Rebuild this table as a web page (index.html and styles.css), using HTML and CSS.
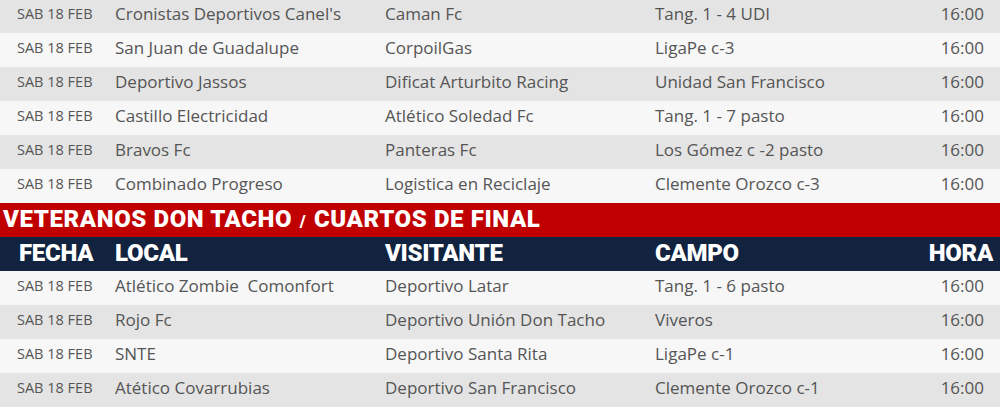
FILE: index.html
```html
<!DOCTYPE html>
<html lang="es">
<head>
<meta charset="utf-8">
<title>Partidos</title>
<link rel="stylesheet" href="styles.css">
</head>
<body>
<div class="schedule">
  <div class="row first"><span class="date">SAB 18 FEB</span><span>Cronistas Deportivos Canel's</span><span>Caman Fc</span><span>Tang. 1 - 4 UDI</span><span class="time">16:00</span></div>
  <div class="row"><span class="date">SAB 18 FEB</span><span>San Juan de Guadalupe</span><span>CorpoilGas</span><span>LigaPe c-3</span><span class="time">16:00</span></div>
  <div class="row"><span class="date">SAB 18 FEB</span><span>Deportivo Jassos</span><span>Dificat Arturbito Racing</span><span>Unidad San Francisco</span><span class="time">16:00</span></div>
  <div class="row"><span class="date">SAB 18 FEB</span><span>Castillo Electricidad</span><span>Atlético Soledad Fc</span><span>Tang. 1 - 7 pasto</span><span class="time">16:00</span></div>
  <div class="row"><span class="date">SAB 18 FEB</span><span>Bravos Fc</span><span>Panteras Fc</span><span>Los Gómez c -2 pasto</span><span class="time">16:00</span></div>
  <div class="row"><span class="date">SAB 18 FEB</span><span>Combinado Progreso</span><span>Logistica en Reciclaje</span><span>Clemente Orozco c-3</span><span class="time">16:00</span></div>
</div>
<div class="section-title">VETERANOS DON TACHO <span class="slash">/</span> CUARTOS DE FINAL</div>
<div class="head-row"><span>FECHA</span><span>LOCAL</span><span>VISITANTE</span><span>CAMPO</span><span class="time">HORA</span></div>
<div class="schedule alt">
  <div class="row"><span class="date">SAB 18 FEB</span><span>Atlético Zombie&nbsp; Comonfort</span><span>Deportivo Latar</span><span>Tang. 1 - 6 pasto</span><span class="time">16:00</span></div>
  <div class="row"><span class="date">SAB 18 FEB</span><span>Rojo Fc</span><span>Deportivo Unión Don Tacho</span><span>Viveros</span><span class="time">16:00</span></div>
  <div class="row"><span class="date">SAB 18 FEB</span><span>SNTE</span><span>Deportivo Santa Rita</span><span>LigaPe c-1</span><span class="time">16:00</span></div>
  <div class="row"><span class="date">SAB 18 FEB</span><span>Atético Covarrubias</span><span>Deportivo San Francisco</span><span>Clemente Orozco c-1</span><span class="time">16:00</span></div>
</div>
</body>
</html>
```
FILE: styles.css
```css
html, body {
  margin: 0;
  padding: 0;
  background: #f7f7f7;
}
body {
  width: 1000px;
  overflow: hidden;
  font-family: "Open Sans", "DejaVu Sans", sans-serif;
  color: #555555;
}
.row, .head-row {
  display: grid;
  grid-template-columns: 98px 270px 270px 1fr auto;
  align-items: center;
  height: 34px;
  padding: 0 16px 5px 17px;
  box-sizing: border-box;
  font-size: 17px;
  white-space: nowrap;
}
.row.first {
  height: 33px;
  padding-bottom: 7px;
}
.schedule .row:nth-child(odd) { background: #e4e4e4; }
.schedule .row:nth-child(even) { background: #f7f7f7; }
.schedule.alt .row:nth-child(odd) { background: #f7f7f7; }
.schedule.alt .row:nth-child(even) { background: #e4e4e4; }
.date {
  font-size: 14.5px;
}
.section-title {
  background: #c00000;
  color: #ffffff;
  height: 34px;
  line-height: 32px;
  padding-left: 3px;
  font-family: Roboto, "Liberation Sans", sans-serif;
  font-weight: 900;
  font-size: 24px;
  letter-spacing: 0.6px;
  white-space: nowrap;
}
.slash {
  font-size: 17px;
  margin: 0 1px;
}
.head-row {
  background: #11233f;
  color: #ffffff;
  font-family: Roboto, "Liberation Sans", sans-serif;
  font-weight: 900;
  font-size: 24px;
  padding: 0 7px 2px 19px;
  grid-template-columns: 96px 270px 270px 1fr auto;
  letter-spacing: -0.3px;
}
```
